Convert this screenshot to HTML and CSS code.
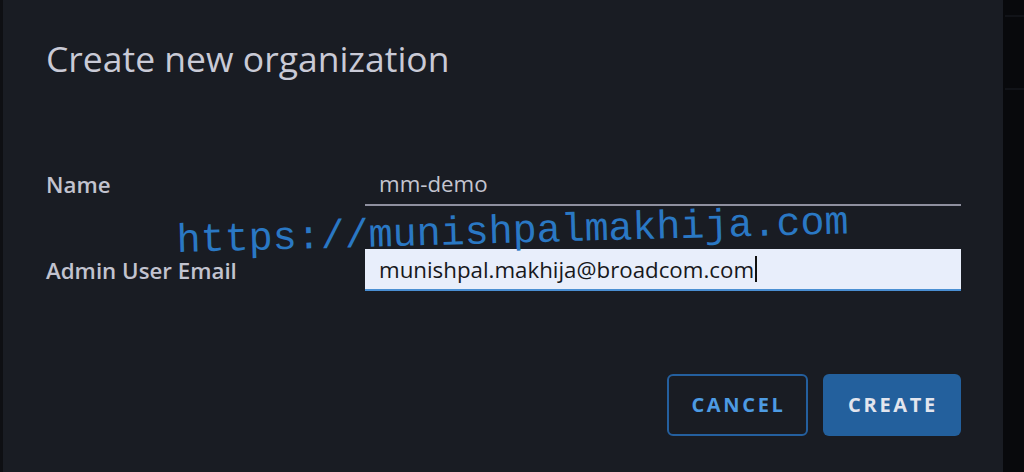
FILE: index.html
```html
<!DOCTYPE html>
<html lang="en">
<head>
<meta charset="utf-8">
<title>Create new organization</title>
<link rel="stylesheet" href="styles.css">
</head>
<body>
  <div class="edge"></div>
  <main class="modal">
    <h1 class="title">Create new organization</h1>
    <form class="form">
      <label class="label" for="org-name">Name</label>
      <div class="field">
        <input id="org-name" class="input input-plain" type="text" value="mm-demo">
      </div>
      <label class="label" for="admin-email">Admin User Email</label>
      <div class="field">
        <div id="admin-email" class="input input-focus">munishpal.makhija@broadcom.com<span class="caret"></span></div>
      </div>
    </form>
    <div class="actions">
      <button class="btn btn-outline" type="button">CANCEL</button>
      <button class="btn btn-solid" type="button">CREATE</button>
    </div>
    <div class="watermark">https://munishpalmakhija.com</div>
  </main>
  <aside class="rail">
    <div class="rail-line rail-line-1"></div>
    <div class="rail-line rail-line-2"></div>
  </aside>
</body>
</html>
```

FILE: styles.css
```css
* { box-sizing: border-box; }

html, body {
  margin: 0;
  height: 472px;
  overflow: hidden;
}

body {
  display: flex;
  background: #0a0b0e;
  font-family: "Open Sans", "Noto Sans", sans-serif;
}

.edge {
  width: 3px;
  background: #0e0f13;
  flex: none;
}

.modal {
  position: relative;
  flex: 1;
  background: #191c23;
  padding: 38px 42px 0 43px;
  display: flex;
  flex-direction: column;
}

.title {
  margin: 0;
  font-size: 35.5px;
  line-height: 40px;
  font-weight: 400;
  color: #c9cad6;
  letter-spacing: 0;
}

.form {
  margin-top: 85px;
  display: grid;
  grid-template-columns: 319px 1fr;
  row-gap: 43px;
  align-items: center;
}

.label {
  font-size: 22.3px;
  font-weight: 600;
  color: #c2c3cf;
}

.field {
  display: flex;
}

.input {
  width: 100%;
  height: 43px;
  border: 0;
  margin: 0;
  padding: 0 14px;
  font-family: "Open Sans", "Noto Sans", sans-serif;
  font-size: 22.3px;
  outline: none;
}

.input-plain {
  background: transparent;
  color: #c4c5d0;
  border-bottom: 2px solid #8f909f;
}

.input-focus {
  height: 42px;
  display: flex;
  align-items: center;
  background: #e8eefb;
  color: #17181c;
  border-bottom: 2px solid #4a8fd3;
}

.caret {
  display: inline-block;
  width: 2px;
  height: 26px;
  margin-left: 1px;
  background: #111;
}

.actions {
  margin-top: 83px;
  display: flex;
  justify-content: flex-end;
  gap: 15px;
}

.btn {
  height: 62px;
  border-radius: 6px;
  font-family: "Open Sans", "Noto Sans", sans-serif;
  font-size: 20px;
  font-weight: 700;
  letter-spacing: 2.7px;
  padding: 0 0 2px 2px;
  cursor: pointer;
}

.btn-outline {
  width: 141px;
  background: transparent;
  border: 2px solid #245f9e;
  color: #4d9be3;
}

.btn-solid {
  width: 138px;
  background: #23609d;
  border: 0;
  color: #e2e5ee;
}

.watermark {
  position: absolute;
  left: 174px;
  top: 222px;
  font-family: "Liberation Mono", "Courier New", monospace;
  font-size: 40px;
  line-height: 40px;
  color: #2a78c4;
  white-space: nowrap;
  transform-origin: 0 31px;
  transform: rotate(-1.6deg);
  pointer-events: none;
}

.rail {
  width: 21px;
  flex: none;
  background: #08090c;
  padding-top: 15px;
}

.rail-line {
  height: 2px;
  margin-left: 2px;
  background: #111318;
}

.rail-line-2 {
  margin-top: 71px;
}
```
